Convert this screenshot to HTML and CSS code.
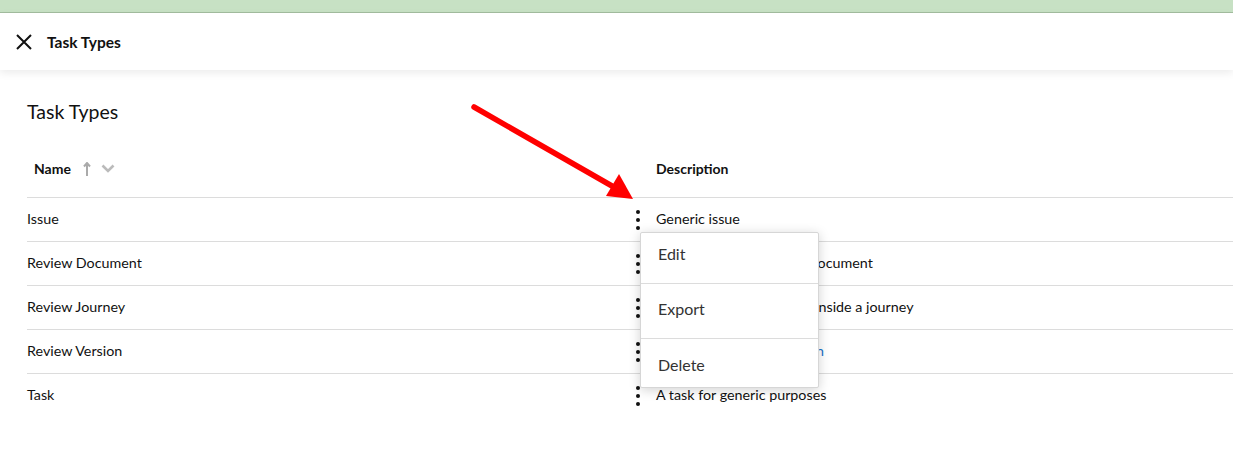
FILE: index.html
```html
<!DOCTYPE html>
<html lang="en">
<head>
  <meta charset="UTF-8" />
  <title>Task Types</title>
  <link rel="stylesheet" href="styles.css">
</head>
<body>

<div class="topbar"></div>

<!-- Panel header -->
<div class="panel-head">
  <button class="close-btn" title="Close">
    <svg width="16" height="16" viewBox="0 0 16 16"><path d="M1 1L15 15M15 1L1 15" stroke="#111" stroke-width="2" fill="none"/></svg>
  </button>
  <span class="panel-title">Task Types</span>
</div>

<div class="content">
  <h1 class="page-title">Task Types</h1>

  <div class="table">
    <div class="row head">
      <div class="col-name">
        Name
        <svg class="sort-up" width="8" height="14" viewBox="0 0 8 14"><path d="M4 1V14M1 4.5L4 1L7 4.5" stroke="#aaa" stroke-width="2" fill="none"/></svg>
        <svg class="sort-down" width="14" height="9" viewBox="0 0 14 9"><path d="M1.5 1.5L7 7L12.5 1.5" stroke="#bbb" stroke-width="2.6" fill="none"/></svg>
      </div>
      <div class="col-kebab"></div>
      <div class="col-desc">Description</div>
    </div>

    <div class="row">
      <div class="col-name">Issue</div>
      <div class="col-kebab"><span class="kebab"><i></i><i></i><i></i></span></div>
      <div class="col-desc">Generic issue</div>
    </div>
    <div class="row">
      <div class="col-name">Review Document</div>
      <div class="col-kebab"><span class="kebab"><i></i><i></i><i></i></span></div>
      <div class="col-desc">A task for reviewing any document</div>
    </div>
    <div class="row">
      <div class="col-name">Review Journey</div>
      <div class="col-kebab"><span class="kebab"><i></i><i></i><i></i></span></div>
      <div class="col-desc">A task to review the step inside a journey</div>
    </div>
    <div class="row">
      <div class="col-name">Review Version</div>
      <div class="col-kebab"><span class="kebab"><i></i><i></i><i></i></span></div>
      <div class="col-desc">A task to review its versio<span class="link">n</span></div>
    </div>
    <div class="row">
      <div class="col-name">Task</div>
      <div class="col-kebab"><span class="kebab"><i></i><i></i><i></i></span></div>
      <div class="col-desc">A task for generic purposes</div>
    </div>
  </div>
</div>

<!-- Context menu opened from the first row -->
<div class="menu">
  <div class="menu-item first">Edit</div>
  <div class="menu-item">Export</div>
  <div class="menu-item last">Delete</div>
</div>

<!-- Annotation arrow -->
<svg class="annotation" width="1233" height="467" viewBox="0 0 1233 467">
  <path d="M474 107L612 186" stroke="#ff0000" stroke-width="5.5" stroke-linecap="round" fill="none"/>
  <path d="M633 199L606 196L619 174Z" fill="#ff0000"/>
</svg>

</body>
</html>
```

FILE: styles.css
```css
body {
  margin: 0;
  font-family: Lato, 'Noto Sans', sans-serif;
  color: #111;
  background: #fff;
}

.topbar {
  height: 12px;
  background: #c7e1c4;
  border-bottom: 1px solid #a3bd9f;
}

.panel-head {
  height: 57px;
  display: flex;
  align-items: center;
  padding-left: 15px;
  background: #fff;
  box-shadow: 0 3px 8px rgba(0, 0, 0, 0.08);
  position: relative;
}

.close-btn {
  background: none;
  border: none;
  padding: 0;
  width: 18px;
  height: 18px;
  display: flex;
  align-items: center;
  justify-content: center;
  margin-right: 14px;
  cursor: pointer;
}

.panel-title {
  font-size: 15.5px;
  font-weight: 700;
}

.content {
  padding: 30px 0 0 27px;
}

.page-title {
  margin: 0;
  font-size: 19.5px;
  font-weight: 400;
  line-height: 24px;
}

.table {
  margin-top: 17px;
}

.row {
  display: flex;
  align-items: center;
  box-sizing: border-box;
  height: 44px;
  padding-bottom: 2px;
  border-top: 1px solid #dcdcdc;
  font-size: 14.3px;
}

.row.head {
  height: 56px;
  padding-bottom: 1px;
  border-top: none;
  font-weight: 700;
  font-size: 14px;
}

.row.head .col-name {
  padding-left: 7px;
  display: flex;
  align-items: center;
}

.sort-up {
  margin-left: 12px;
}

.sort-down {
  margin-left: 10px;
}

.col-name {
  width: 608px;
  box-sizing: border-box;
}

.col-kebab {
  width: 21px;
  display: flex;
  padding-left: 1px;
  box-sizing: border-box;
}

.col-desc {
  flex: 1;
}

.link {
  color: #1a73c8;
}

.kebab {
  display: flex;
  flex-direction: column;
  gap: 4px;
  margin-top: 3px;
}

.kebab i {
  display: block;
  width: 4px;
  height: 4px;
  border-radius: 50%;
  background: #111;
}

.menu {
  position: absolute;
  left: 640px;
  top: 232px;
  width: 177px;
  background: #fff;
  border: 1px solid #d6d6d6;
  border-radius: 2px;
  box-shadow: 0 2px 12px rgba(0, 0, 0, 0.18);
  font-size: 16px;
  color: #333;
}

.menu-item {
  padding: 15px 17px 19px;
  line-height: 20px;
  border-bottom: 1px solid #dcdcdc;
}

.menu-item.first {
  padding-top: 11px;
}

.menu-item.last {
  padding: 16px 17px 12px;
  border-bottom: none;
}

.annotation {
  position: absolute;
  left: 0;
  top: 0;
  pointer-events: none;
}
```
